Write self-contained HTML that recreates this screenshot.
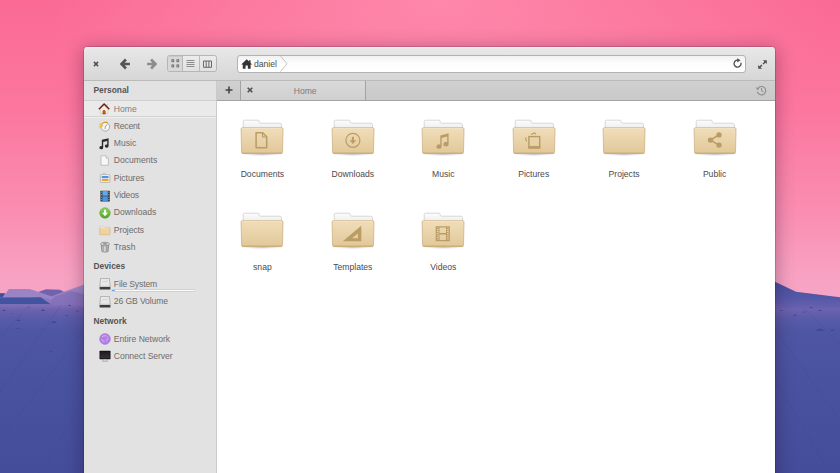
<!DOCTYPE html>
<html>
<head>
<meta charset="utf-8">
<title>Files</title>
<style>
html,body{margin:0;padding:0;}
body{width:840px;height:473px;overflow:hidden;position:relative;background:#f17a9f;font-family:"Liberation Sans",sans-serif;font-size:8.6px;line-height:11px;color:#555;}
#bg{position:absolute;left:0;top:0;width:840px;height:473px;}
#win{position:absolute;left:84px;top:47px;width:691px;height:440px;border-radius:4px 4px 0 0;background:#fff;box-shadow:0 0 0 1px rgba(40,0,30,0.16),0 3px 18px 2px rgba(40,0,40,0.31);overflow:hidden;}
#hdr{position:absolute;left:0;top:0;width:691px;height:34px;background:linear-gradient(#e8e8e8,#d6d6d6);border-bottom:1px solid #bababa;box-sizing:border-box;box-shadow:inset 0 1px 0 #f1f1f1;}
#hdr svg{position:absolute;}
#side{position:absolute;left:0;top:34px;width:132px;height:406px;background:#e2e2e2;border-right:1px solid #cacaca;box-sizing:content-box;}
#tabs{position:absolute;left:133px;top:34px;width:558px;height:19px;background:linear-gradient(#d0d0d0,#c9c9c9);border-bottom:1px solid #a3a3a3;box-sizing:content-box;}
#tabs .plus{position:absolute;left:0;top:0;width:23px;height:19px;border-right:1px solid #a3a3a3;background:linear-gradient(#d0d0d0,#c9c9c9);}
#tabs .tab{position:absolute;left:24px;top:0;width:124px;height:19px;background:linear-gradient(#d9d9d9,#d0d0d0);border-right:1px solid #a3a3a3;}
#tabs .tab span{position:absolute;left:2.2px;width:124px;top:4.5px;text-align:center;color:#7b7b7b;}
#tabs svg{position:absolute;}
.sh{position:absolute;left:9.5px;font-weight:bold;color:#555;font-size:8.4px;}
.si{position:absolute;left:29.8px;color:#6c6c6c;white-space:nowrap;}
.ic{position:absolute;}
#sel{position:absolute;left:0;top:19px;width:132px;height:17px;background:#eaeaea;border-top:1px solid #cfcfcf;border-bottom:1px solid #d3d3d3;box-sizing:border-box;box-shadow:0 1px 0 #efefef;}
#usage{position:absolute;left:28.3px;top:208.6px;width:83px;height:1.8px;background:#fbfbfb;box-shadow:0 0 0 .4px #bdbdbd;border-radius:1px;}
#usage i{position:absolute;left:0;top:0;width:2.4px;height:100%;background:#5b9fe6;border-radius:1px;}
.f{position:absolute;width:90px;height:70px;text-align:center;color:#4a4a4a;}
.f svg{position:absolute;left:21px;top:0;}
.f span{position:absolute;left:0;width:90px;top:51.5px;white-space:nowrap;}
#path{position:absolute;left:153px;top:8px;width:508.5px;height:17.6px;box-sizing:border-box;border:1px solid #b3b3b3;border-radius:3px;background:linear-gradient(#f1f1f1,#fdfdfd 45%,#fff);}
#path span{position:absolute;left:16px;top:3px;color:#4a4a4a;}
#path svg{position:absolute;}
#vs{position:absolute;left:83px;top:8px;width:50px;height:17px;box-sizing:border-box;border:1px solid #b6b6b6;border-radius:2.5px;background:linear-gradient(#ececec,#e1e1e1);}
#vs b{position:absolute;left:0;top:0;width:14.2px;height:15px;background:#d8d8d8;border-right:1px solid #b6b6b6;border-radius:1.5px 0 0 1.5px;box-shadow:inset 0 1px 1px rgba(0,0,0,0.07);}
#vs u{position:absolute;left:31px;top:0;width:1px;height:15px;background:#bbb;}
</style>
</head>
<body>
<svg id="bg" viewBox="0 0 840 473">
<defs>
<linearGradient id="sky" x1="0" y1="0" x2="0" y2="1"><stop offset="0" stop-color="#fa6a94"/><stop offset="0.35" stop-color="#fc769e"/><stop offset="0.7" stop-color="#fa8eb2"/><stop offset="0.9" stop-color="#f8a2c2"/><stop offset="1" stop-color="#f4a6c8"/></linearGradient>
<radialGradient id="glow" gradientUnits="userSpaceOnUse" cx="440" cy="0" r="400" gradientTransform="matrix(1 0 0 0.5 0 0)"><stop offset="0" stop-color="#ff94b4" stop-opacity=".7"/><stop offset="1" stop-color="#ff94b4" stop-opacity="0"/></radialGradient>
<linearGradient id="gnd" x1="0" y1="0" x2="0" y2="1"><stop offset="0" stop-color="#8670bb"/><stop offset="0.03" stop-color="#6e63b0"/><stop offset="0.08" stop-color="#5a5ca9"/><stop offset="0.15" stop-color="#4f57a4"/><stop offset="0.4" stop-color="#4953a0"/><stop offset="1" stop-color="#434d9a"/></linearGradient>
<linearGradient id="mtr" x1="0" y1="0" x2="0" y2="1"><stop offset="0" stop-color="#4750a0"/><stop offset="0.6" stop-color="#5558a7"/><stop offset="1" stop-color="#6a62b0"/></linearGradient>
<linearGradient id="mtl" x1="0" y1="0" x2="0" y2="1"><stop offset="0" stop-color="#a68dca"/><stop offset="1" stop-color="#8573ba"/></linearGradient>
</defs>
<rect width="840" height="306" fill="url(#sky)"/>
<rect width="840" height="210" fill="url(#glow)"/>
<rect y="304" width="840" height="169" fill="url(#gnd)"/>
<g stroke="#3f4994" stroke-width=".6" opacity=".35" fill="none"><path d="M62 304 0 392M84 330 0 440M84 400 40 473M30 304 0 338M800 304 840 345M775 330 840 420M775 380 830 473"/></g>
<polygon points="30,298 84,292 84,305 0,305 0,298" fill="#8b78bd"/><polygon points="38,292 46,289.3 60,289.8 66,293 50,297" fill="#6f62ae"/>
<polygon points="52,296 84,284.4 84,305 47,305" fill="url(#mtl)"/>
<polygon points="53,297.5 71,291 84,294.5 84,305 50,305" fill="#8371b8" opacity=".8"/>
<polygon points="0,293.4 5.7,293.4 8.9,289 29.8,289 55.1,297.4 50.7,299.4 40.6,297.2 0,297.2" fill="#9a84c6"/>
<polygon points="0,293.2 5.2,293.2 2.5,297.2 0,297.2" fill="#404c9a"/>
<polygon points="0,297.2 40.6,297.2 50.7,304.2 0,304.2" fill="#4253a0"/>
<polygon points="775,281.8 796,291.8 840,297.3 840,309 775,309" fill="url(#mtr)"/>
<g fill="#3f4a95"><path d="M2 311q2-2.600 4 0zM16 321q2.500-3 5 0zM41 311q2-2.800 4 0zM51 323q3-4 6 0zM65 316q1.500-2 3 0zM76 311.500q1.500-2 3 0zM68 306q1.500-2.400 3 0zM16 329q2-2.400 4 0zM11 314q1-1.500 2 0zM28 308q1-1.500 2 0zM49 352q2-2 4 0zM780 311q1.500-2.200 3 0zM793 316q2-2.600 4 0zM803 312.500q1.500-2 3 0zM818 311q2-2.400 4 0zM809 308q2-2 4 0zM816 331q4-5 8 0zM830 331q2.500-3 5 0z"/></g>
</svg>
<svg width="0" height="0" style="position:absolute"><defs>
<linearGradient id="ffr" x1="0" y1="0" x2="0" y2="1"><stop offset="0" stop-color="#f0ddb9"/><stop offset="1" stop-color="#e1c899"/></linearGradient>
<linearGradient id="fbk" x1="0" y1="0" x2="0" y2="1"><stop offset="0" stop-color="#fdfdfd"/><stop offset="1" stop-color="#e6e6e6"/></linearGradient>
<radialGradient id="fsh"><stop offset="0" stop-color="#000" stop-opacity=".22"/><stop offset="1" stop-color="#000" stop-opacity="0"/></radialGradient>
</defs></svg>
<div id="win">
<div id="hdr">
<svg style="left:8.3px;top:12.7px" width="8" height="8" viewBox="0 0 8 8"><path d="M1.9 1.9l4.2 4.2M6.1 1.9l-4.2 4.2" stroke="#505050" stroke-width="1.5" fill="none"/></svg>
<svg style="left:35px;top:10.5px" width="12" height="12" viewBox="0 0 12 12"><path d="M.7 6 6 .6 7.9 2.5 5.6 4.8H10.9V7.2H5.6L7.9 9.5 6 11.4z" fill="#555"/></svg>
<svg style="left:61.6px;top:10.5px" width="12" height="12" viewBox="0 0 12 12"><path d="M11.3 6 6 .6 4.1 2.5 6.4 4.8H1.1V7.2H6.4L4.1 9.5 6 11.4z" fill="#8c8c8c"/></svg>
<div id="vs"><b></b><u></u>
<svg style="left:2.7px;top:3.4px" width="9" height="9" viewBox="0 0 9 9"><g fill="none" stroke="#6a6a6a" stroke-width=".9"><rect x=".9" y=".7" width="1.8" height="2"/><rect x="5.9" y=".7" width="1.8" height="2"/><rect x=".9" y="5.9" width="1.8" height="2"/><rect x="5.9" y="5.9" width="1.8" height="2"/></g></svg>
<svg style="left:18.4px;top:3.1px" width="9" height="9" viewBox="0 0 9 9"><path d="M.5 1.5h8M.5 3.5h8M.5 5.5h8M.5 7.5h8" stroke="#757575" stroke-width=".8"/></svg>
<svg style="left:34.9px;top:3.6px" width="9" height="9" viewBox="0 0 9 9"><path d="M.5 1h8v6.3h-8zM3.2 1v6.3M5.9 1v6.3" stroke="#5c5c5c" stroke-width=".9" fill="none"/></svg>
</div>
<div id="path">
<svg style="left:2.6px;top:2.9px" width="11.4" height="10" viewBox="0 0 11 10" preserveAspectRatio="none"><path d="M5.5.3.2 5.4h1.5v4.3h2.7V6.6h2.2v3.1h2.7V5.4h1.5L9.2 3.9V1.2H7.8v1.4z" fill="#333"/></svg>
<span>daniel</span>
<svg style="left:42px;top:0" width="8" height="15.6" viewBox="0 0 8 15.6"><path d="M.5 0 7 7.8.5 15.6" fill="none" stroke="#bdbdbd" stroke-width=".9"/></svg>
<svg style="left:494.2px;top:1.7px" width="11" height="11" viewBox="0 0 11 11"><path d="M5.6 2.1A3.5 3.5 0 1 0 8.9 4.6" fill="none" stroke="#4f4f4f" stroke-width="1.3"/><path d="M5.2.2 8.6 2.3 5.2 4.4z" fill="#4f4f4f"/></svg>
</div>
<svg style="left:674px;top:12.9px" width="9" height="9" viewBox="0 0 9 9"><path d="M4.9.2h3.9v3.9zM.2 8.8V4.9l3.9 3.9z" fill="#4f4f4f"/><path d="M7.6 1.4 5.1 3.9M1.4 7.6l2.5-2.5" stroke="#4f4f4f" stroke-width="1.4"/></svg>
</div>
<div id="side">
<div class="sh" style="top:4px">Personal</div>
<div id="sel"></div>
<div class="sh" style="top:180px">Devices</div>
<div class="sh" style="top:234.5px">Network</div>
<svg class="ic" style="left:14.4px;top:22.0px;width:12px;height:12px" viewBox="0 0 12 12"><rect x="8.6" y="1.4" width="1.3" height="2.6" fill="#efe4cf" stroke="#c9b99b" stroke-width=".3"/><path d="M2.3 6v5h7.6V6L6.1 2.4z" fill="#f4ecdc" stroke="#cdbfa5" stroke-width=".5"/><path d="M4.9 11V8.6q0-1.3 1.2-1.300t1.200 1.300V11z" fill="#c9671c" stroke="#7c3b10" stroke-width=".5"/><path d="M.9 6.300 6.100 1.100l5.200 5.200" fill="none" stroke="#681c1c" stroke-width="1.400" stroke-linejoin="miter"/></svg>
<div class="si" style="top:22.5px;color:#7f7f7f">Home</div>
<svg class="ic" style="left:14.6px;top:39.7px;width:12px;height:12px" viewBox="0 0 12 12"><circle cx="6.300" cy="5.800" r="4.300" fill="#f6f6f6" stroke="#9b9b9b" stroke-width=".8"/><path d="M2.600 3A4.500 4.500 0 0 1 9 2.100" fill="none" stroke="#d3a42d" stroke-width="1.100"/><path d="M.5 1.900 4.600 4.700.5 7.600z" fill="#f0bd35"/><path d="M.9 2.600v4.200" stroke="#f8d877" stroke-width=".6"/><path d="M6.300 5.800 8 3.600" stroke="#666" stroke-width=".7" fill="none"/><path d="M6.300 5.800 6 8" stroke="#c44" stroke-width=".6" fill="none"/></svg>
<div class="si" style="top:39.8px;letter-spacing:-0.22px">Recent</div>
<svg class="ic" style="left:13.6px;top:56.6px;width:12px;height:12px" viewBox="0 0 12 12"><path d="M3.800 1.700 10.600.200v7.900a1.900 1.600 0 1 1-1.400-1.600V3L5.200 3.900v5.900a1.900 1.600 0 1 1-1.400-1.600z" fill="#2b2b2b"/></svg>
<div class="si" style="top:57.1px">Music</div>
<svg class="ic" style="left:14.5px;top:73.9px;width:12px;height:12px" viewBox="0 0 12 12"><path d="M2 .8h5l2.400 2.400v7H2z" fill="#f8f8f8" stroke="#adadad" stroke-width=".7"/><path d="M7 .8v2.400h2.400" fill="#e4e4e4" stroke="#adadad" stroke-width=".6"/></svg>
<div class="si" style="top:74.4px">Documents</div>
<svg class="ic" style="left:14.5px;top:91.2px;width:12px;height:12px" viewBox="0 0 12 12"><rect x="3.600" y="1.300" width="2.800" height="2" rx=".6" fill="#ececec" stroke="#a2a2a2" stroke-width=".5"/><rect x="1.400" y="2.700" width="9.400" height="7.700" rx=".7" fill="#fafafa" stroke="#a0a0a0" stroke-width=".7"/><rect x="2.700" y="4" width="6.800" height="5.100" fill="#fdf3d8"/><rect x="2.700" y="4" width="6.800" height="2.200" fill="#4f94e2"/><rect x="2.700" y="7" width="6.800" height="2.100" fill="#eda12e"/></svg>
<div class="si" style="top:91.7px;letter-spacing:-0.06px">Pictures</div>
<svg class="ic" style="left:14.6px;top:108.9px;width:12px;height:12px" viewBox="0 0 12 12"><rect x="1.400" y=".7" width="9.400" height="10.700" rx=".5" fill="#33363d"/><rect x="3.400" y="1.100" width="5.400" height="4.600" fill="#5fabf2"/><rect x="3.400" y="6.300" width="5.400" height="4.700" fill="#4796e6"/><g fill="#aab0ba"><rect x="1.900" y="1.600" width=".9" height="1.100"/><rect x="1.900" y="4" width=".9" height="1.100"/><rect x="1.900" y="6.600" width=".9" height="1.100"/><rect x="1.900" y="9" width=".9" height="1.100"/><rect x="9.400" y="1.600" width=".9" height="1.100"/><rect x="9.400" y="4" width=".9" height="1.100"/><rect x="9.400" y="6.600" width=".9" height="1.100"/><rect x="9.400" y="9" width=".9" height="1.100"/></g></svg>
<div class="si" style="top:109.4px;letter-spacing:-0.16px">Videos</div>
<svg class="ic" style="left:14.5px;top:125.5px;width:12px;height:12px" viewBox="0 0 12 12"><defs><linearGradient id="dlg" x1="0" y1="0" x2="0" y2="1"><stop offset="0" stop-color="#8fd45e"/><stop offset="1" stop-color="#4fa32b"/></linearGradient></defs><circle cx="6" cy="6" r="5.300" fill="url(#dlg)" stroke="#56a032" stroke-width=".5"/><path d="M5 2.800h2v3h2L6 9.300 3 5.800h2z" fill="#fff"/></svg>
<div class="si" style="top:126.3px">Downloads</div>
<svg class="ic" style="left:14.5px;top:143.1px;width:12px;height:12px" viewBox="0 0 12 12"><path d="M1 2.300h4l.8 1h5v7H1z" fill="#f3f3f3" stroke="#c4c4c4" stroke-width=".6"/><rect x=".8" y="4.200" width="10.200" height="6.500" rx=".5" fill="#efd29c" stroke="#d8b57a" stroke-width=".6"/><path d="M1.200 4.700h9.400" stroke="#f8e6c2" stroke-width=".6"/></svg>
<div class="si" style="top:143.6px;letter-spacing:-0.1px">Projects</div>
<svg class="ic" style="left:14.7px;top:160.4px;width:12px;height:12px" viewBox="0 0 12 12"><defs><linearGradient id="trg" x1="0" y1="0" x2="1" y2="0"><stop offset="0" stop-color="#9c9c9c"/><stop offset=".35" stop-color="#dcdcdc"/><stop offset="1" stop-color="#a2a2a2"/></linearGradient></defs><path d="M2.200 3.400h7.600l-.7 7.200q-2.800 1.200-6.200 0z" fill="url(#trg)" stroke="#757575" stroke-width=".6"/><path d="M4.400 4.800v5.800M7.600 4.800v5.800" stroke="#8a8a8a" stroke-width=".6"/><ellipse cx="6" cy="3" rx="4.500" ry="1.800" fill="#d4d4d4" stroke="#747474" stroke-width=".6"/><ellipse cx="6" cy="2.900" rx="2.200" ry=".8" fill="#8f8f8f"/></svg>
<div class="si" style="top:160.9px">Trash</div>
<svg class="ic" style="left:14.7px;top:196.5px;width:12px;height:12px" viewBox="0 0 12 12"><path d="M1.6.5h8.8l.9 8.6H.7z" fill="#e9e9e9" stroke="#9f9f9f" stroke-width=".7"/><path d="M3.4 4.6q1.2-2.4 2.6-1t2.8-1.4" stroke="#c9c9c9" stroke-width=".8" fill="none"/><path d="M.6 8.2h10.8" stroke="#bdbdbd" stroke-width=".6"/><rect x=".6" y="9" width="10.8" height="2.5" rx=".5" fill="#3e3e3e"/></svg>
<div class="si" style="top:198.1px;letter-spacing:-0.15px">File System</div>
<svg class="ic" style="left:14.7px;top:214.5px;width:12px;height:12px" viewBox="0 0 12 12"><path d="M1.6.5h8.8l.9 8.6H.7z" fill="#e9e9e9" stroke="#9f9f9f" stroke-width=".7"/><path d="M3.4 4.6q1.2-2.4 2.6-1t2.8-1.4" stroke="#c9c9c9" stroke-width=".8" fill="none"/><path d="M.6 8.2h10.8" stroke="#bdbdbd" stroke-width=".6"/><rect x=".6" y="9" width="10.8" height="2.5" rx=".5" fill="#3e3e3e"/></svg>
<div class="si" style="top:215.3px;letter-spacing:-0.1px">26 GB Volume</div>
<svg class="ic" style="left:14.7px;top:252.4px;width:12px;height:12px" viewBox="0 0 12 12"><circle cx="6" cy="6" r="5.4" fill="#b47fe4" stroke="#a06ad6" stroke-width=".5"/><path d="M3.2 3.6q1.6-1.6 3.4-.8M2.6 6.4q.8 2 2.6 2.2M7.4 7.4q1.2-.4 1.6-1.8M7.8 3.2l.8.8" stroke="#d9bcf5" stroke-width=".9" fill="none" stroke-linecap="round"/></svg>
<div class="si" style="top:252.9px">Entire Network</div>
<svg class="ic" style="left:14.6px;top:269.3px;width:12px;height:12px" viewBox="0 0 12 12"><defs><linearGradient id="scr" x1="0" y1="0" x2="0" y2="1"><stop offset="0" stop-color="#1c1c1c"/><stop offset="1" stop-color="#3a2f3c"/></linearGradient></defs><rect x=".5" y=".8" width="11" height="8.4" rx=".6" fill="#111"/><rect x="1.3" y="1.6" width="9.4" height="6.6" fill="url(#scr)"/><rect x="4.2" y="9.2" width="3.6" height="2" fill="#e6e6e6" stroke="#8d8d8d" stroke-width=".5"/><rect x="3.2" y="10.8" width="5.6" height=".9" rx=".3" fill="#d8d8d8" stroke="#999" stroke-width=".3"/></svg>
<div class="si" style="top:269.8px;letter-spacing:-0.07px">Connect Server</div>
<div id="usage"><i></i></div>
</div>
<div id="tabs"><div class="plus"><svg style="left:7.9px;top:5.4px" width="8" height="8" viewBox="0 0 8 8"><path d="M4 .5v7M.5 4h7" stroke="#444" stroke-width="1.6"/></svg></div><div class="tab"><svg style="left:6.4px;top:5.8px" width="6" height="6" viewBox="0 0 6 6"><path d="M.7.7l4.6 4.6M5.3.7.7 5.3" stroke="#505050" stroke-width="1.6"/></svg><span>Home</span></div>
<svg style="left:538.5px;top:3.5px" width="11" height="11" viewBox="0 0 11 11"><path d="M2 3.4A4.2 4.2 0 1 1 1.4 6.6" fill="none" stroke="#8c8c8c" stroke-width="1.1"/><path d="M.2 2l.6 3 2.8-1z" fill="#8c8c8c"/><path d="M5.6 3v2.8l1.9 1" fill="none" stroke="#8c8c8c" stroke-width="1"/></svg>
</div>
<div id="files">
<div class="f" style="left:133.4px;top:70.0px"><svg width="48" height="42" viewBox="0 0 48 42"><ellipse cx="24" cy="37.4" rx="21" ry="1.6" fill="url(#fsh)"/><path d="M5.2 7.6V4.6q0-1.4 1.4-1.4H20q1 0 1.1.9l.2 1.2q.2.9 1.2.9h19.6q1.4 0 1.4 1.4v8H5.2z" fill="url(#fbk)" stroke="#c9c9c9" stroke-width=".7"/><path d="M3.1 11.9q0-1.2 1.2-1.2h39.5q1.2 0 1.2 1.2l-.5 23.4q0 1.2-1.2 1.2H4.8q-1.2 0-1.2-1.2z" fill="url(#ffr)" stroke="#cdb184" stroke-width=".8"/><path d="M4 11.4h40" stroke="#f6ead0" stroke-width=".7"/><path d="M4.2 36.1h39.6" stroke="#c3a572" stroke-width=".9"/><path d="M18.1 15.8h6.6l4 4v10.9H18.1z" fill="none" stroke="#ba9c65" stroke-width="1.5" stroke-linejoin="round"/><path d="M24.5 16v4h4" fill="none" stroke="#ba9c65" stroke-width="1.1"/></svg><span>Documents</span></div>
<div class="f" style="left:223.8px;top:70.0px"><svg width="48" height="42" viewBox="0 0 48 42"><ellipse cx="24" cy="37.4" rx="21" ry="1.6" fill="url(#fsh)"/><path d="M5.2 7.6V4.6q0-1.4 1.4-1.4H20q1 0 1.1.9l.2 1.2q.2.9 1.2.9h19.6q1.4 0 1.4 1.4v8H5.2z" fill="url(#fbk)" stroke="#c9c9c9" stroke-width=".7"/><path d="M3.1 11.9q0-1.2 1.2-1.2h39.5q1.2 0 1.2 1.2l-.5 23.4q0 1.2-1.2 1.2H4.8q-1.2 0-1.2-1.2z" fill="url(#ffr)" stroke="#cdb184" stroke-width=".8"/><path d="M4 11.4h40" stroke="#f6ead0" stroke-width=".7"/><path d="M4.2 36.1h39.6" stroke="#c3a572" stroke-width=".9"/><circle cx="23.9" cy="23.3" r="7" fill="none" stroke="#ba9c65" stroke-width="1.2"/><path d="M22.9 19.8h2v3.4h2.4l-3.4 3.8-3.4-3.8h2.4z" fill="#ba9c65"/></svg><span>Downloads</span></div>
<div class="f" style="left:314.3px;top:70.0px"><svg width="48" height="42" viewBox="0 0 48 42"><ellipse cx="24" cy="37.4" rx="21" ry="1.6" fill="url(#fsh)"/><path d="M5.2 7.6V4.6q0-1.4 1.4-1.4H20q1 0 1.1.9l.2 1.2q.2.9 1.2.9h19.6q1.4 0 1.4 1.4v8H5.2z" fill="url(#fbk)" stroke="#c9c9c9" stroke-width=".7"/><path d="M3.1 11.9q0-1.2 1.2-1.2h39.5q1.2 0 1.2 1.2l-.5 23.4q0 1.2-1.2 1.2H4.8q-1.2 0-1.2-1.2z" fill="url(#ffr)" stroke="#cdb184" stroke-width=".8"/><path d="M4 11.4h40" stroke="#f6ead0" stroke-width=".7"/><path d="M4.2 36.1h39.6" stroke="#c3a572" stroke-width=".9"/><path d="M21.300 18.400 29.600 16.200v11a2.600 2.200 0 1 1-1.400-1.950v-5.650l-5.500 1.500v8.500a2.600 2.200 0 1 1-1.400-1.950z" fill="#ba9c65"/></svg><span>Music</span></div>
<div class="f" style="left:404.7px;top:70.0px"><svg width="48" height="42" viewBox="0 0 48 42"><ellipse cx="24" cy="37.4" rx="21" ry="1.6" fill="url(#fsh)"/><path d="M5.2 7.6V4.6q0-1.4 1.4-1.4H20q1 0 1.1.9l.2 1.2q.2.9 1.2.9h19.6q1.4 0 1.4 1.4v8H5.2z" fill="url(#fbk)" stroke="#c9c9c9" stroke-width=".7"/><path d="M3.1 11.9q0-1.2 1.2-1.2h39.5q1.2 0 1.2 1.2l-.5 23.4q0 1.2-1.2 1.2H4.8q-1.2 0-1.2-1.2z" fill="url(#ffr)" stroke="#cdb184" stroke-width=".8"/><path d="M4 11.4h40" stroke="#f6ead0" stroke-width=".7"/><path d="M4.2 36.1h39.6" stroke="#c3a572" stroke-width=".9"/><rect x="18.9" y="19.6" width="10.8" height="10.4" fill="none" stroke="#ba9c65" stroke-width="1.4"/><rect x="18.2" y="29.2" width="12.2" height="2.6" fill="#ba9c65"/><path d="M21.2 17.6l3.2-1.7 1.6 1.3" fill="none" stroke="#ba9c65" stroke-width="1.1"/><path d="M16.4 20.4l-.9 1.6 1.3 2.6" fill="none" stroke="#ba9c65" stroke-width="1.1"/></svg><span>Pictures</span></div>
<div class="f" style="left:495.1px;top:70.0px"><svg width="48" height="42" viewBox="0 0 48 42"><ellipse cx="24" cy="37.4" rx="21" ry="1.6" fill="url(#fsh)"/><path d="M5.2 7.6V4.6q0-1.4 1.4-1.4H20q1 0 1.1.9l.2 1.2q.2.9 1.2.9h19.6q1.4 0 1.4 1.4v8H5.2z" fill="url(#fbk)" stroke="#c9c9c9" stroke-width=".7"/><path d="M3.1 11.9q0-1.2 1.2-1.2h39.5q1.2 0 1.2 1.2l-.5 23.4q0 1.2-1.2 1.2H4.8q-1.2 0-1.2-1.2z" fill="url(#ffr)" stroke="#cdb184" stroke-width=".8"/><path d="M4 11.4h40" stroke="#f6ead0" stroke-width=".7"/><path d="M4.2 36.1h39.6" stroke="#c3a572" stroke-width=".9"/></svg><span>Projects</span></div>
<div class="f" style="left:585.6px;top:70.0px"><svg width="48" height="42" viewBox="0 0 48 42"><ellipse cx="24" cy="37.4" rx="21" ry="1.6" fill="url(#fsh)"/><path d="M5.2 7.6V4.6q0-1.4 1.4-1.4H20q1 0 1.1.9l.2 1.2q.2.9 1.2.9h19.6q1.4 0 1.4 1.4v8H5.2z" fill="url(#fbk)" stroke="#c9c9c9" stroke-width=".7"/><path d="M3.1 11.9q0-1.2 1.2-1.2h39.5q1.2 0 1.2 1.2l-.5 23.4q0 1.2-1.2 1.2H4.8q-1.2 0-1.2-1.2z" fill="url(#ffr)" stroke="#cdb184" stroke-width=".8"/><path d="M4 11.4h40" stroke="#f6ead0" stroke-width=".7"/><path d="M4.2 36.1h39.6" stroke="#c3a572" stroke-width=".9"/><path d="M28 17.9 19.5 23.1 28 28.1" fill="none" stroke="#ba9c65" stroke-width="1.6"/><circle cx="28" cy="17.9" r="2.7" fill="#ba9c65"/><circle cx="19.5" cy="23.1" r="2.7" fill="#ba9c65"/><circle cx="28" cy="28.1" r="2.7" fill="#ba9c65"/></svg><span>Public</span></div>
<div class="f" style="left:133.4px;top:163.3px"><svg width="48" height="42" viewBox="0 0 48 42"><ellipse cx="24" cy="37.4" rx="21" ry="1.6" fill="url(#fsh)"/><path d="M5.2 7.6V4.6q0-1.4 1.4-1.4H20q1 0 1.1.9l.2 1.2q.2.9 1.2.9h19.6q1.4 0 1.4 1.4v8H5.2z" fill="url(#fbk)" stroke="#c9c9c9" stroke-width=".7"/><path d="M3.1 11.9q0-1.2 1.2-1.2h39.5q1.2 0 1.2 1.2l-.5 23.4q0 1.2-1.2 1.2H4.8q-1.2 0-1.2-1.2z" fill="url(#ffr)" stroke="#cdb184" stroke-width=".8"/><path d="M4 11.4h40" stroke="#f6ead0" stroke-width=".7"/><path d="M4.2 36.1h39.6" stroke="#c3a572" stroke-width=".9"/></svg><span>snap</span></div>
<div class="f" style="left:223.8px;top:163.3px"><svg width="48" height="42" viewBox="0 0 48 42"><ellipse cx="24" cy="37.4" rx="21" ry="1.6" fill="url(#fsh)"/><path d="M5.2 7.6V4.6q0-1.4 1.4-1.4H20q1 0 1.1.9l.2 1.2q.2.9 1.2.9h19.6q1.4 0 1.4 1.4v8H5.2z" fill="url(#fbk)" stroke="#c9c9c9" stroke-width=".7"/><path d="M3.1 11.9q0-1.2 1.2-1.2h39.5q1.2 0 1.2 1.2l-.5 23.4q0 1.2-1.2 1.2H4.8q-1.2 0-1.2-1.2z" fill="url(#ffr)" stroke="#cdb184" stroke-width=".8"/><path d="M4 11.4h40" stroke="#f6ead0" stroke-width=".7"/><path d="M4.2 36.1h39.6" stroke="#c3a572" stroke-width=".9"/><path d="M32.3 15.7v15.5H13.8zM28.9 23.4v4.9H23z" fill="#ba9c65" fill-rule="evenodd"/></svg><span>Templates</span></div>
<div class="f" style="left:314.3px;top:163.3px"><svg width="48" height="42" viewBox="0 0 48 42"><ellipse cx="24" cy="37.4" rx="21" ry="1.6" fill="url(#fsh)"/><path d="M5.2 7.6V4.6q0-1.4 1.4-1.4H20q1 0 1.1.9l.2 1.2q.2.9 1.2.9h19.6q1.4 0 1.4 1.4v8H5.2z" fill="url(#fbk)" stroke="#c9c9c9" stroke-width=".7"/><path d="M3.1 11.9q0-1.2 1.2-1.2h39.5q1.2 0 1.2 1.2l-.5 23.4q0 1.2-1.2 1.2H4.8q-1.2 0-1.2-1.2z" fill="url(#ffr)" stroke="#cdb184" stroke-width=".8"/><path d="M4 11.4h40" stroke="#f6ead0" stroke-width=".7"/><path d="M4.2 36.1h39.6" stroke="#c3a572" stroke-width=".9"/><rect x="17.3" y="16.9" width="12.9" height="13.7" fill="none" stroke="#ba9c65" stroke-width="1.2"/><path d="M20 16.9v13.7M27.5 16.9v13.7" stroke="#ba9c65" stroke-width="1" fill="none"/><path d="M20 23.7h7.5" stroke="#ba9c65" stroke-width="1.4" fill="none"/><path d="M18.65 17.8v12.4M28.85 17.8v12.4" stroke="#ba9c65" stroke-width="1.5" stroke-dasharray="1.1 1" fill="none"/></svg><span>Videos</span></div>
</div>
</div>
</body>
</html>
